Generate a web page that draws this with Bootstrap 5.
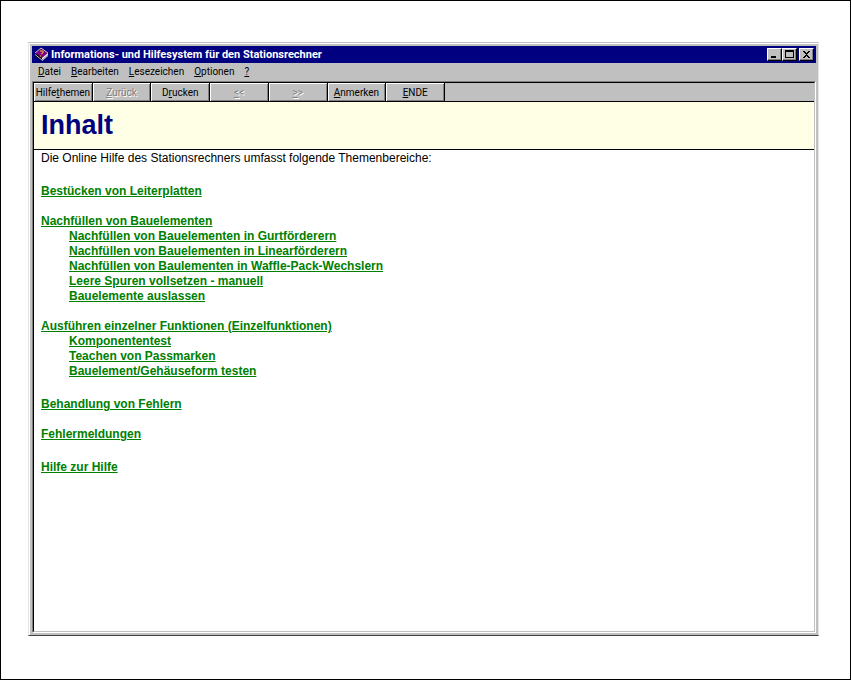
<!DOCTYPE html>
<html lang="de">
<head>
<meta charset="utf-8">
<meta name="viewport" content="width=device-width, initial-scale=1">
<title>Informations- und Hilfesystem für den Stationsrechner</title>
<link rel="stylesheet" href="https://cdn.jsdelivr.net/npm/bootstrap@5.3.0/dist/css/bootstrap.min.css">
<style>
  :root { --face: #c0c0c0; --shade: #808080; --navy: #000080; --cream: #ffffe6; --link: #008000; }
  body { font-family: "Liberation Sans", Arial, sans-serif; font-size: 12px; line-height: 15px; color: #000; background: #fff; }
  .sheet { border: 1px solid #000; padding: 41px 31px 43px 27px; }
  /* outer bevel, then the grey frame */
  .win { border: 1px solid #e4e4e4; border-top-color: var(--face); border-bottom-color: #404040; }
  .win-frame { background: var(--face); border-top: 1px solid #fff; border-left: 1px solid #fff; padding: 2px; }
  .titlebar { background: var(--navy); color: #fff; height: 17px; padding: 0 2px; }
  .titlebar h1 { font-family: Roboto, sans-serif; font-size: 11px; line-height: 17px; font-weight: 700; margin: 0 0 0 2px; }
  .cap { width: 15px; height: 13px; padding: 0; border: 1px solid; border-color: #fff #000 #000 #fff; border-radius: 0; background: var(--face); box-shadow: inset -1px -1px 0 var(--shade); }
  .cap svg { display: block; width: 13px; height: 11px; }
  .cap-close { margin-left: 2px; }
  .menus { height: 18px; padding-left: 6px; gap: 10px; font-family: Roboto, sans-serif; font-size: 10px; }
  .menus a { color: #000; text-decoration: none; line-height: 18px; }
  .client { background: #fff; border: 1px solid; border-color: var(--shade) #fff #fff var(--shade); }
  .client-inner { border: 1px solid; border-color: #000 var(--face) var(--face) #000; }
  .tools { background: var(--face); border-bottom: 1px solid #000; height: 19px; }
  .tool-set { width: 411px; }
  .tool { flex: 1 1 0; min-width: 0; padding: 0; border: 0; border-right: 1px solid #000; border-radius: 0; background: var(--face); box-shadow: inset 1px 1px 0 #fff, inset -1px -1px 0 var(--shade); font-family: Roboto, sans-serif; font-size: 10px; line-height: 17px; color: #000; white-space: nowrap; }
  .tool:disabled { color: var(--shade); text-shadow: 1px 1px 0 #fff; }
  .banner { background: var(--cream); border-bottom: 1px solid #000; height: 48px; padding: 0 7px; }
  .banner h2 { color: var(--navy); font-size: 27px; line-height: 46px; font-weight: 700; }
  .topics { padding: 1px 7px 0; }
  .topics ul { padding-left: 28px; }
  .topics a { color: var(--link); font-weight: 700; text-decoration: underline; text-underline-offset: 1px; text-decoration-thickness: 1px; }
  .gap-s { margin-top: 15px; }
  .gap-l { margin-top: 18px; }
  u { text-underline-offset: 1px; text-decoration-thickness: 1px; }
</style>
<script src="https://cdn.jsdelivr.net/npm/bootstrap@5.3.0/dist/js/bootstrap.bundle.min.js"></script>
</head>
<body>
<div class="sheet min-vh-100 d-flex">
  <div class="win flex-grow-1 d-flex">
    <div class="win-frame flex-grow-1 d-flex flex-column">
      <header class="titlebar d-flex align-items-center">
        <svg class="flex-shrink-0" width="15" height="15" viewBox="0 0 15 15" aria-hidden="true">
          <path d="M1 6 7 1l7 5-6 6z" fill="#800080"/>
          <path d="M1 6 7 1l7 5" fill="none" stroke="#c0c0c0"/>
          <path d="M1 6v3l7 5v-3z" fill="#000"/>
          <path d="m8 11 6-5v3l-6 5z" fill="#fff"/>
          <path d="m8 13 6-5" stroke="#808080"/>
          <path d="M1 7.500l7 5.500" stroke="#c0c0c0"/>
          <path d="M6 4h3v2L7 7M6 9h1" fill="none" stroke="#e0c040"/>
        </svg>
        <h1 class="flex-grow-1 text-nowrap">Informations- und Hilfesystem für den Stationsrechner</h1>
        <button type="button" class="cap" aria-label="Minimieren"><svg viewBox="0 0 13 11" shape-rendering="crispEdges"><path d="M3 7h5v2H3z"/></svg></button>
        <button type="button" class="cap" aria-label="Maximieren"><svg viewBox="0 0 13 11" shape-rendering="crispEdges"><path d="M2 1h9v8H2zM3 3v5h7V3z" fill-rule="evenodd"/></svg></button>
        <button type="button" class="cap cap-close" aria-label="Schließen"><svg viewBox="0 0 13 11" shape-rendering="crispEdges"><path d="M3 2h2v1h1v1h1V3h1V2h2v1H9v1H8v1H7v1h1v1h1v1h1v1H8V8H7V7H6v1H5v1H3V8h1V7h1V6h1V5H5V4H4V3H3z"/></svg></button>
      </header>
      <nav class="menus d-flex" aria-label="Menü">
        <a href="#"><u>D</u>atei</a>
        <a href="#"><u>B</u>earbeiten</a>
        <a href="#"><u>L</u>esezeichen</a>
        <a href="#"><u>O</u>ptionen</a>
        <a href="#"><u>?</u></a>
      </nav>
      <div class="client flex-grow-1 d-flex">
        <div class="client-inner flex-grow-1">
          <div class="tools d-flex">
            <div class="tool-set d-flex">
              <button type="button" class="tool">Hilfe<u>t</u>hemen</button>
              <button type="button" class="tool" disabled><u>Z</u>urück</button>
              <button type="button" class="tool">D<u>r</u>ucken</button>
              <button type="button" class="tool" disabled><u>&lt;</u>&lt;</button>
              <button type="button" class="tool" disabled><u>&gt;</u>&gt;</button>
              <button type="button" class="tool"><u>A</u>nmerken</button>
              <button type="button" class="tool"><u>E</u>NDE</button>
            </div>
          </div>
          <div class="banner"><h2 class="mb-0">Inhalt</h2></div>
          <main class="topics">
            <p class="mb-0">Die Online Hilfe des Stationsrechners umfasst folgende Themenbereiche:</p>
            <div class="gap-l"><a href="#">Bestücken von Leiterplatten</a></div>
            <div class="gap-s"><a href="#">Nachfüllen von Bauelementen</a></div>
            <ul class="list-unstyled mb-0">
              <li><a href="#">Nachfüllen von Bauelementen in Gurtförderern</a></li>
              <li><a href="#">Nachfüllen von Bauelementen in Linearförderern</a></li>
              <li><a href="#">Nachfüllen von Baulementen in Waffle-Pack-Wechslern</a></li>
              <li><a href="#">Leere Spuren vollsetzen - manuell</a></li>
              <li><a href="#">Bauelemente auslassen</a></li>
            </ul>
            <div class="gap-s"><a href="#">Ausführen einzelner Funktionen (Einzelfunktionen)</a></div>
            <ul class="list-unstyled mb-0">
              <li><a href="#">Komponententest</a></li>
              <li><a href="#">Teachen von Passmarken</a></li>
              <li><a href="#">Bauelement/Gehäuseform testen</a></li>
            </ul>
            <div class="gap-l"><a href="#">Behandlung von Fehlern</a></div>
            <div class="gap-s"><a href="#">Fehlermeldungen</a></div>
            <div class="gap-l"><a href="#">Hilfe zur Hilfe</a></div>
          </main>
        </div>
      </div>
    </div>
  </div>
</div>
</body>
</html>
